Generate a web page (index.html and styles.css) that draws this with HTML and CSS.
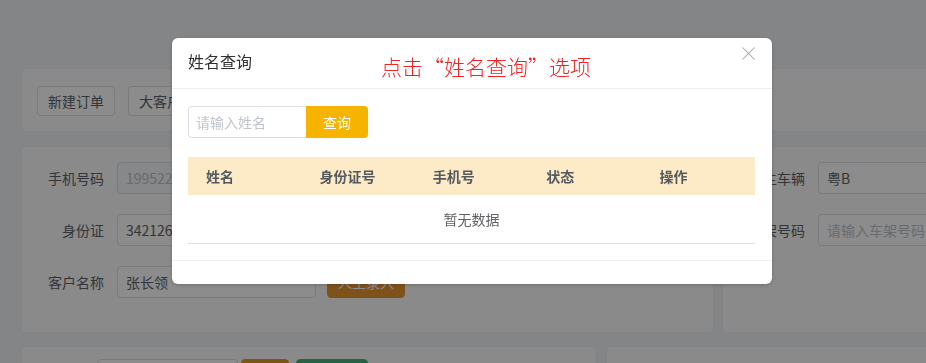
FILE: index.html
```html
<!DOCTYPE html>
<html lang="zh-CN">
  <head>
    <meta charset="UTF-8" />
    <meta name="viewport" content="width=device-width, initial-scale=1.0" />
    <title>订单管理</title>
    <link rel="stylesheet" href="styles.css">
  </head>
  <body>
    <div class="page">
      <div class="card toolbar">
        <button class="btn">新建订单</button>
        <button class="btn">大客户订单</button>
      </div>

      <div class="row row-mid">
        <div class="card form-card">
          <div class="form-row">
            <label class="label">手机号码</label>
            <input class="field" value="19952236688" disabled />
          </div>
          <div class="form-row">
            <label class="label">身份证</label>
            <input class="field" value="342126199001011234" />
          </div>
          <div class="form-row">
            <label class="label">客户名称</label>
            <input class="field" value="张长领" />
            <button class="btn btn-orange">人工录入</button>
          </div>
        </div>
        <div class="card form-card">
          <div class="form-row">
            <label class="label">主车辆</label>
            <input class="field wide" value="粤B" />
          </div>
          <div class="form-row">
            <label class="label">车架号码</label>
            <input class="field wide" placeholder="请输入车架号码" />
          </div>
        </div>
      </div>

      <div class="row row-bottom">
        <div class="card bottom-card">
          <input class="field small" />
          <button class="btn btn-orange short"></button>
          <button class="btn btn-green"></button>
        </div>
        <div class="card bottom-card"></div>
      </div>
    </div>

    <div class="overlay">
      <div class="dialog">
        <div class="dialog-header">
          <span class="dialog-title">姓名查询</span>
          <span class="tip">点击“姓名查询”选项</span>
          <span class="close"></span>
        </div>
        <div class="dialog-body">
          <div class="search">
            <input class="search-input" placeholder="请输入姓名" />
            <button class="search-btn">查询</button>
          </div>
          <table class="table">
            <thead>
              <tr>
                <th>姓名</th>
                <th>身份证号</th>
                <th>手机号</th>
                <th>状态</th>
                <th>操作</th>
              </tr>
            </thead>
            <tbody>
              <tr>
                <td class="empty" colspan="5">暂无数据</td>
              </tr>
            </tbody>
          </table>
        </div>
        <div class="dialog-footer"></div>
      </div>
    </div>
  </body>
</html>
```

FILE: styles.css
```css
body {
  margin: 0;
  background-color: #f0f2f5;
  font-family: "Noto Sans CJK SC", "Noto Sans", sans-serif;
  font-size: 14px;
  color: #606266;
  overflow: hidden;
}
.page {
  width: 1200px;
  padding: 68px 0 0 21px;
}
.card {
  background: #fbfbfb;
  border: 1px solid #ebeef5;
  border-radius: 4px;
  box-sizing: border-box;
}
.toolbar {
  height: 64px;
  padding: 17px 15px;
  display: flex;
  gap: 13px;
}
.btn {
  height: 30px;
  padding: 0 10px;
  border: 1px solid #dcdfe6;
  border-radius: 4px;
  background: #ffffff;
  color: #606266;
  font-family: inherit;
  font-size: 14px;
}
.row {
  display: flex;
}
.row-mid {
  margin-top: 14px;
  gap: 8px;
}
.row-mid .card:first-child {
  width: 693px;
}
.row-mid .card:last-child {
  flex: 1;
}
.form-card {
  height: 187px;
  padding: 15px 0 0 0;
  display: flex;
  flex-direction: column;
  gap: 20px;
}
.form-row {
  display: flex;
  align-items: center;
  height: 32px;
}
.label {
  width: 82px;
  padding-right: 13px;
  text-align: right;
  font-size: 14px;
  color: #606266;
}
.field {
  box-sizing: border-box;
  width: 199px;
  height: 32px;
  padding: 0 8px;
  border: 1px solid #dcdfe6;
  border-radius: 4px;
  background: #ffffff;
  font-family: inherit;
  font-size: 14px;
  color: #606266;
}
.field:disabled {
  background: #f5f7fa;
  color: #c0c4cc;
}
.field::placeholder {
  color: #c0c4cc;
}
.field.wide {
  width: 300px;
}
.btn-orange {
  height: 32px;
  margin-left: 11px;
  width: 78px;
  background: #e8962f;
  border-color: #e8962f;
  color: #ffffff;
}
.btn-green {
  height: 32px;
  width: 72px;
  margin-left: 7px;
  background: #46b47c;
  border-color: #46b47c;
  color: #ffffff;
}
.row-bottom {
  margin-top: 13px;
  gap: 9px;
}
.row-bottom .card:first-child {
  width: 576px;
}
.row-bottom .card:last-child {
  flex: 1;
}
.bottom-card {
  height: 80px;
  padding: 12px 0 0 75px;
  display: flex;
  align-items: flex-start;
}
.field.small {
  width: 141px;
}
.btn-orange.short {
  width: 48px;
  margin-left: 3px;
}

/* dialog */
.overlay {
  position: fixed;
  top: 0;
  left: 0;
  right: 0;
  bottom: 0;
  background: rgba(0, 0, 0, 0.45);
}
.dialog {
  position: absolute;
  top: 38px;
  left: 172px;
  width: 600px;
  background: #ffffff;
  border-radius: 6px;
  box-shadow: 0 1px 4px rgba(0, 0, 0, 0.2);
}
.dialog-header {
  position: relative;
  height: 51px;
  padding: 0 16px;
  display: flex;
  align-items: center;
  border-bottom: 1px solid #ebeef5;
  box-sizing: border-box;
}
.dialog-title {
  font-size: 16px;
  color: #303133;
  margin-top: -4px;
}
.tip {
  margin-left: 129px;
  font-size: 21px;
  font-weight: 300;
  color: #f02424;
  margin-top: 5px;
}
.close {
  position: absolute;
  top: 9px;
  right: 17px;
  width: 13px;
  height: 13px;
}
.close::before,
.close::after {
  content: "";
  position: absolute;
  left: -2px;
  top: 6px;
  width: 17px;
  height: 1px;
  background: #a0a3a8;
  transform: rotate(45deg);
}
.close::after {
  transform: rotate(-45deg);
}
.dialog-body {
  padding: 17px 17px 16px 16px;
  border-bottom: 1px solid #f0f0f0;
}
.search {
  display: flex;
}
.search-input {
  box-sizing: border-box;
  width: 118px;
  height: 32px;
  padding: 0 7px;
  border: 1px solid #dcdfe6;
  border-right: none;
  border-radius: 4px 0 0 4px;
  font-family: inherit;
  font-size: 14px;
}
.search-input::placeholder {
  color: #c0c4cc;
}
.search-btn {
  width: 62px;
  height: 32px;
  border: none;
  border-radius: 0 4px 4px 0;
  background: #f6b300;
  color: #ffffff;
  font-family: inherit;
  font-size: 14px;
}
.table {
  width: 100%;
  margin-top: 19px;
  border-collapse: collapse;
  table-layout: fixed;
}
.table th {
  height: 38px;
  padding: 0 0 0 18px;
  background: #fcebc6;
  text-align: left;
  font-weight: bold;
  font-size: 14px;
  color: #555a60;
}
.table td.empty {
  height: 46px;
  text-align: center;
  color: #606266;
  border-bottom: 1px solid #dcdfe6;
}
.dialog-footer {
  height: 23px;
}
```
